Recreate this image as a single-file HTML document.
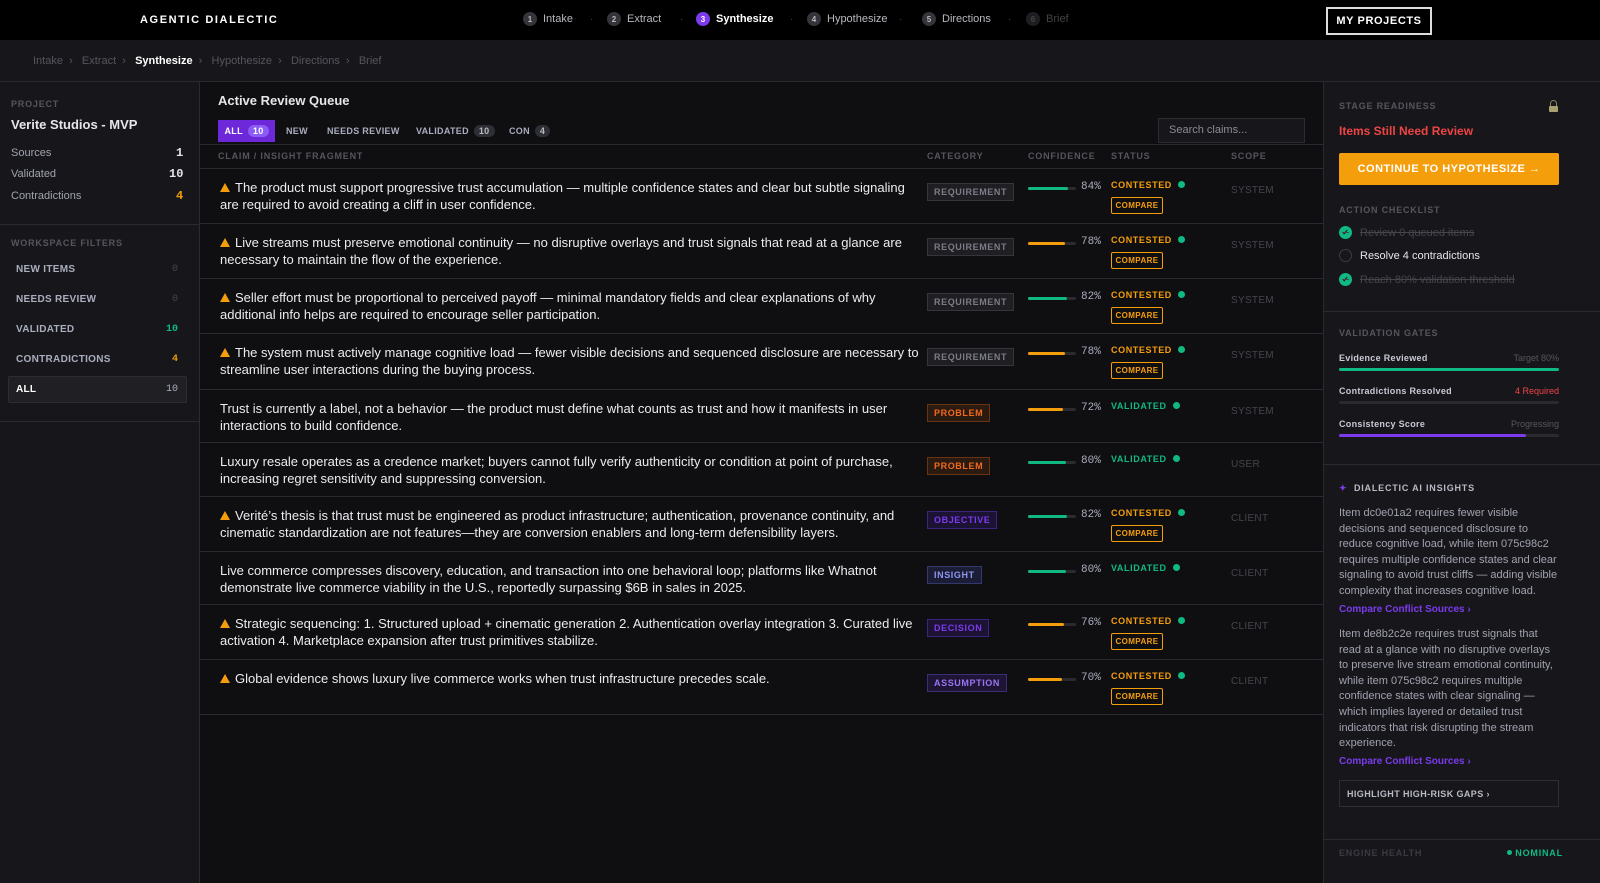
<!DOCTYPE html>
<html><head><meta charset="utf-8"><style>
*{box-sizing:border-box;margin:0;padding:0}
body{width:1600px;height:883px;overflow:hidden;background:#0f0f12;font-family:"Liberation Sans",sans-serif;color:#e6e6ea;position:relative}
.abs{position:absolute}
.top{left:0;top:0;width:1600px;height:40px;background:#000}
.logo{left:140px;top:14px;font-size:11px;font-weight:bold;letter-spacing:1.6px;color:#fff}
.step{top:12px;font-size:11px;color:#b8b8c0;display:flex;align-items:center;gap:6px}
.step .n{width:14px;height:14px;border-radius:50%;background:#34343a;color:#bbb;font-size:8px;display:flex;align-items:center;justify-content:center;font-weight:bold}
.dot{top:14px;color:#444;font-size:10px}
.myp{left:1326px;top:7px;width:106px;height:28px;border:2px solid #ddd;color:#fff;font-size:11px;font-weight:bold;letter-spacing:.6px;display:flex;align-items:center;justify-content:center}
.crumb{left:0;top:40px;width:1600px;height:42px;background:#17171b;border-bottom:1px solid #2a2a30}
.cr{top:55px;font-size:11px;color:#55555d}
.left{left:0;top:82px;width:200px;height:801px;background:#17171b;border-right:1px solid #2a2a30}
.right{left:1323px;top:82px;width:277px;height:801px;background:#17171b;border-left:1px solid #2a2a30}
.lbl{font-size:9px;font-weight:bold;letter-spacing:.8px;color:#55555d}
.hr{height:1px;background:#2a2a30}
.mono{font-family:"Liberation Mono",monospace}
.fi{left:16px;font-size:10px;font-weight:bold;color:#a9adbd;letter-spacing:.3px}
.fn{right:1421px;font-size:10px;text-align:right}
.tab{top:120px;height:22px;font-size:9px;font-weight:bold;color:#a9adbd;display:flex;align-items:center;gap:5px;letter-spacing:.3px}
.badge{background:#2e2e36;border-radius:8px;padding:1px 5px;font-size:9px;color:#bbb}
.th{top:151px;font-size:9px;font-weight:bold;color:#55555d;letter-spacing:.8px}
.row{left:200px;width:1123px;border-bottom:1px solid #2a2a30}
.txt{position:absolute;left:20px;top:10px;width:700px;font-size:13px;line-height:17px;color:#ececf0}
.txt.w{text-indent:15px}
.warn{position:absolute;left:20px;top:14px;width:0;height:0;border-left:5px solid transparent;border-right:5px solid transparent;border-bottom:9px solid #f59e0b}
.cat{position:absolute;left:727px;height:18px;padding:0 6px;font-size:9px;font-weight:bold;letter-spacing:.6px;display:flex;align-items:center;border:1px solid}
.req{background:#1e1e23;border-color:#35353c;color:#7c7c86}
.prob{background:#2b1a10;border-color:#6a3414;color:#f26a1b}
.obj{background:#1c1334;border-color:#3b2380;color:#7c3aed}
.ins{background:#1a1d35;border-color:#34396b;color:#8e96ee}
.asm{background:#1d1533;border-color:#3c2d77;color:#9a74f5}
.bar{position:absolute;left:828px;width:48px;height:3px;background:#2a2a30;border-radius:2px}
.bar i{display:block;height:3px;border-radius:2px}
.pct{position:absolute;left:881px;font-size:11px;color:#a9adbd;font-family:"Liberation Mono",monospace}
.st{position:absolute;left:911px;font-size:9px;font-weight:bold;letter-spacing:.6px}
.st b{display:inline-block;width:7px;height:7px;border-radius:50%;background:#10b981;margin-left:6px;vertical-align:0}
.cmp{position:absolute;left:911px;width:52px;height:17px;border:1px solid #f59e0b;color:#f59e0b;font-size:8px;font-weight:bold;letter-spacing:.4px;display:flex;align-items:center;justify-content:center;border-radius:2px}
.sc{position:absolute;left:1031px;font-size:10px;color:#45454d;letter-spacing:.3px}
.gl{font-size:9px;font-weight:bold;color:#c8cad4;letter-spacing:.3px}
.gr{font-size:9px;color:#55555d;right:41px}
.gb{left:1339px;width:220px;height:3px;background:#2a2a30;border-radius:2px}
.chk{width:13px;height:13px;border-radius:50%;background:#10b981;color:#0f0f12;font-size:8px;display:flex;align-items:center;justify-content:center;font-weight:bold}
.ck{left:1339px;display:flex;align-items:center;gap:8px;font-size:11px}
.para{left:1339px;width:222px;font-size:11px;line-height:15.6px;color:#a0a3ae}
.lnk{left:1339px;font-size:10px;font-weight:bold;color:#7c3aed}
</style></head><body>
<div class="abs top"></div>
<div class="abs logo">AGENTIC DIALECTIC</div>
<div class="abs step" style="left:523px"><span class="n">1</span>Intake</div>
<div class="abs dot" style="left:590px">·</div>
<div class="abs step" style="left:607px"><span class="n">2</span>Extract</div>
<div class="abs dot" style="left:680px">·</div>
<div class="abs step" style="left:696px;color:#fff;font-weight:bold"><span class="n" style="background:#7c3aed;color:#fff">3</span>Synthesize</div>
<div class="abs dot" style="left:790px">·</div>
<div class="abs step" style="left:807px"><span class="n">4</span>Hypothesize</div>
<div class="abs dot" style="left:899px">·</div>
<div class="abs step" style="left:922px"><span class="n">5</span>Directions</div>
<div class="abs dot" style="left:1008px">·</div>
<div class="abs step" style="left:1026px;color:#444"><span class="n" style="background:#1e1e22;color:#444">6</span>Brief</div>
<div class="abs myp">MY PROJECTS</div>

<div class="abs crumb"></div>
<div class="abs cr" style="left:33px">Intake &nbsp;›&nbsp;&nbsp; Extract &nbsp;›&nbsp;&nbsp; <span style="color:#fff;font-weight:bold">Synthesize</span> &nbsp;›&nbsp;&nbsp; Hypothesize &nbsp;›&nbsp;&nbsp; Directions &nbsp;›&nbsp;&nbsp; Brief</div>

<div class="abs left"></div>
<div class="abs lbl" style="left:11px;top:99px">PROJECT</div>
<div class="abs" style="left:11px;top:117px;font-size:13px;font-weight:bold">Verite Studios - MVP</div>
<div class="abs" style="left:11px;top:147px;font-size:11px;color:#a0a3ae">Sources</div>
<div class="abs mono" style="left:176px;top:146px;font-size:12px;font-weight:bold">1</div>
<div class="abs" style="left:11px;top:168px;font-size:11px;color:#a0a3ae">Validated</div>
<div class="abs mono" style="left:169px;top:167px;font-size:12px;font-weight:bold">10</div>
<div class="abs" style="left:11px;top:190px;font-size:11px;color:#a0a3ae">Contradictions</div>
<div class="abs mono" style="left:176px;top:189px;font-size:12px;font-weight:bold;color:#f59e0b">4</div>
<div class="abs hr" style="left:0;top:224px;width:199px"></div>
<div class="abs lbl" style="left:11px;top:238px">WORKSPACE FILTERS</div>
<div class="abs fi" style="top:264px">NEW ITEMS</div><div class="abs mono" style="left:172px;top:264px;font-size:10px;color:#45454d">0</div>
<div class="abs fi" style="top:294px">NEEDS REVIEW</div><div class="abs mono" style="left:172px;top:294px;font-size:10px;color:#45454d">0</div>
<div class="abs fi" style="top:324px">VALIDATED</div><div class="abs mono" style="left:166px;top:324px;font-size:10px;font-weight:bold;color:#10b981">10</div>
<div class="abs fi" style="top:354px">CONTRADICTIONS</div><div class="abs mono" style="left:172px;top:354px;font-size:10px;font-weight:bold;color:#f59e0b">4</div>
<div class="abs" style="left:8px;top:376px;width:179px;height:27px;background:#1f1f24;border:1px solid #2c2c33;border-radius:2px"></div>
<div class="abs fi" style="top:384px;color:#fff">ALL</div><div class="abs mono" style="left:166px;top:384px;font-size:10px;color:#a9adbd">10</div>
<div class="abs hr" style="left:0;top:421px;width:199px"></div>

<div class="abs" style="left:218px;top:93px;font-size:13px;font-weight:bold">Active Review Queue</div>
<div class="abs tab" style="left:218px;width:57px;background:#6d28d9;color:#fff;justify-content:center">ALL <span class="badge" style="background:#8b5cf6;color:#fff">10</span></div>
<div class="abs tab" style="left:286px">NEW</div>
<div class="abs tab" style="left:327px">NEEDS REVIEW</div>
<div class="abs tab" style="left:416px">VALIDATED <span class="badge">10</span></div>
<div class="abs tab" style="left:509px">CON <span class="badge">4</span></div>
<div class="abs" style="left:1158px;top:118px;width:147px;height:25px;border:1px solid #2c2c33;background:#17171b;font-size:11px;color:#8a8a94;padding:5px 10px">Search claims...</div>
<div class="abs hr" style="left:200px;top:144px;width:1123px"></div>
<div class="abs th" style="left:218px">CLAIM / INSIGHT FRAGMENT</div>
<div class="abs th" style="left:927px">CATEGORY</div>
<div class="abs th" style="left:1028px">CONFIDENCE</div>
<div class="abs th" style="left:1111px">STATUS</div>
<div class="abs th" style="left:1231px">SCOPE</div>
<div class="abs hr" style="left:200px;top:168px;width:1123px"></div>

<!-- rows -->
<div class="abs row" style="top:169px;height:55px"><i class="warn"></i><div class="txt w">The product must support progressive trust accumulation — multiple confidence states and clear but subtle signaling are required to avoid creating a cliff in user confidence.</div>
<div class="cat req" style="top:14px">REQUIREMENT</div><div class="bar" style="top:18px"><i style="width:84%;background:#10b981"></i></div><div class="pct" style="top:12px">84%</div>
<div class="st" style="top:11px;color:#f59e0b">CONTESTED<b></b></div><div class="cmp" style="top:28px">COMPARE</div><div class="sc" style="top:16px">SYSTEM</div></div>

<div class="abs row" style="top:224px;height:55px"><i class="warn"></i><div class="txt w">Live streams must preserve emotional continuity — no disruptive overlays and trust signals that read at a glance are necessary to maintain the flow of the experience.</div>
<div class="cat req" style="top:14px">REQUIREMENT</div><div class="bar" style="top:18px"><i style="width:78%;background:#f59e0b"></i></div><div class="pct" style="top:12px">78%</div>
<div class="st" style="top:11px;color:#f59e0b">CONTESTED<b></b></div><div class="cmp" style="top:28px">COMPARE</div><div class="sc" style="top:16px">SYSTEM</div></div>

<div class="abs row" style="top:279px;height:55px"><i class="warn"></i><div class="txt w">Seller effort must be proportional to perceived payoff — minimal mandatory fields and clear explanations of why additional info helps are required to encourage seller participation.</div>
<div class="cat req" style="top:14px">REQUIREMENT</div><div class="bar" style="top:18px"><i style="width:82%;background:#10b981"></i></div><div class="pct" style="top:12px">82%</div>
<div class="st" style="top:11px;color:#f59e0b">CONTESTED<b></b></div><div class="cmp" style="top:28px">COMPARE</div><div class="sc" style="top:16px">SYSTEM</div></div>

<div class="abs row" style="top:334px;height:56px"><i class="warn"></i><div class="txt w">The system must actively manage cognitive load — fewer visible decisions and sequenced disclosure are necessary to streamline user interactions during the buying process.</div>
<div class="cat req" style="top:14px">REQUIREMENT</div><div class="bar" style="top:18px"><i style="width:78%;background:#f59e0b"></i></div><div class="pct" style="top:12px">78%</div>
<div class="st" style="top:11px;color:#f59e0b">CONTESTED<b></b></div><div class="cmp" style="top:28px">COMPARE</div><div class="sc" style="top:16px">SYSTEM</div></div>

<div class="abs row" style="top:390px;height:53px"><div class="txt">Trust is currently a label, not a behavior — the product must define what counts as trust and how it manifests in user interactions to build confidence.</div>
<div class="cat prob" style="top:14px">PROBLEM</div><div class="bar" style="top:18px"><i style="width:72%;background:#f59e0b"></i></div><div class="pct" style="top:12px">72%</div>
<div class="st" style="top:11px;color:#10b981">VALIDATED<b></b></div><div class="sc" style="top:16px">SYSTEM</div></div>

<div class="abs row" style="top:443px;height:54px"><div class="txt">Luxury resale operates as a credence market; buyers cannot fully verify authenticity or condition at point of purchase, increasing regret sensitivity and suppressing conversion.</div>
<div class="cat prob" style="top:14px">PROBLEM</div><div class="bar" style="top:18px"><i style="width:80%;background:#10b981"></i></div><div class="pct" style="top:12px">80%</div>
<div class="st" style="top:11px;color:#10b981">VALIDATED<b></b></div><div class="sc" style="top:16px">USER</div></div>

<div class="abs row" style="top:497px;height:55px"><i class="warn"></i><div class="txt w">Verité’s thesis is that trust must be engineered as product infrastructure; authentication, provenance continuity, and cinematic standardization are not features—they are conversion enablers and long-term defensibility layers.</div>
<div class="cat obj" style="top:14px">OBJECTIVE</div><div class="bar" style="top:18px"><i style="width:82%;background:#10b981"></i></div><div class="pct" style="top:12px">82%</div>
<div class="st" style="top:11px;color:#f59e0b">CONTESTED<b></b></div><div class="cmp" style="top:28px">COMPARE</div><div class="sc" style="top:16px">CLIENT</div></div>

<div class="abs row" style="top:552px;height:53px"><div class="txt">Live commerce compresses discovery, education, and transaction into one behavioral loop; platforms like Whatnot demonstrate live commerce viability in the U.S., reportedly surpassing $6B in sales in 2025.</div>
<div class="cat ins" style="top:14px">INSIGHT</div><div class="bar" style="top:18px"><i style="width:80%;background:#10b981"></i></div><div class="pct" style="top:12px">80%</div>
<div class="st" style="top:11px;color:#10b981">VALIDATED<b></b></div><div class="sc" style="top:16px">CLIENT</div></div>

<div class="abs row" style="top:605px;height:55px"><i class="warn"></i><div class="txt w">Strategic sequencing: 1. Structured upload + cinematic generation 2. Authentication overlay integration 3. Curated live activation 4. Marketplace expansion after trust primitives stabilize.</div>
<div class="cat obj" style="top:14px">DECISION</div><div class="bar" style="top:18px"><i style="width:76%;background:#f59e0b"></i></div><div class="pct" style="top:12px">76%</div>
<div class="st" style="top:11px;color:#f59e0b">CONTESTED<b></b></div><div class="cmp" style="top:28px">COMPARE</div><div class="sc" style="top:16px">CLIENT</div></div>

<div class="abs row" style="top:660px;height:55px"><i class="warn"></i><div class="txt w">Global evidence shows luxury live commerce works when trust infrastructure precedes scale.</div>
<div class="cat asm" style="top:14px">ASSUMPTION</div><div class="bar" style="top:18px"><i style="width:70%;background:#f59e0b"></i></div><div class="pct" style="top:12px">70%</div>
<div class="st" style="top:11px;color:#f59e0b">CONTESTED<b></b></div><div class="cmp" style="top:28px">COMPARE</div><div class="sc" style="top:16px">CLIENT</div></div>

<!-- right -->
<div class="abs right"></div>
<div class="abs lbl" style="left:1339px;top:101px">STAGE READINESS</div>
<div class="abs" style="left:1549px;top:100px;width:9px;height:11px"><div style="width:7px;height:6px;border:1.5px solid #8a8460;border-bottom:none;border-radius:4px 4px 0 0;margin-left:1px"></div><div style="width:9px;height:6px;background:#a8a070;border-radius:1px"></div></div>
<div class="abs" style="left:1339px;top:124px;font-size:12px;font-weight:bold;color:#ef4444">Items Still Need Review</div>
<div class="abs" style="left:1339px;top:153px;width:220px;height:32px;background:#f59e0b;border-radius:2px;color:#fff;font-size:11px;font-weight:bold;letter-spacing:.5px;display:flex;align-items:center;justify-content:center">CONTINUE TO HYPOTHESIZE →</div>
<div class="abs lbl" style="left:1339px;top:205px">ACTION CHECKLIST</div>
<div class="abs ck" style="top:226px;color:#45454d;text-decoration:line-through"><span class="chk">✓</span>Review 0 queued items</div>
<div class="abs ck" style="top:249px;color:#e6e6ea"><span class="chk" style="background:none;border:1.5px solid #3a3a42"></span>Resolve 4 contradictions</div>
<div class="abs ck" style="top:273px;color:#45454d;text-decoration:line-through"><span class="chk">✓</span>Reach 80% validation threshold</div>
<div class="abs hr" style="left:1324px;top:311px;width:276px"></div>
<div class="abs lbl" style="left:1339px;top:328px">VALIDATION GATES</div>
<div class="abs gl" style="left:1339px;top:353px">Evidence Reviewed</div><div class="abs gr" style="top:353px">Target 80%</div>
<div class="abs gb" style="top:368px;background:#10b981"></div>
<div class="abs gl" style="left:1339px;top:386px">Contradictions Resolved</div><div class="abs gr" style="top:386px;color:#ef4444">4 Required</div>
<div class="abs gb" style="top:401px"></div>
<div class="abs gl" style="left:1339px;top:419px">Consistency Score</div><div class="abs gr" style="top:419px">Progressing</div>
<div class="abs gb" style="top:434px"><div style="width:85%;height:3px;background:#7c3aed;border-radius:2px"></div></div>
<div class="abs hr" style="left:1324px;top:464px;width:276px"></div>
<div class="abs lbl" style="left:1339px;top:483px;color:#b8bac4"><span style="color:#7c3aed">✦</span>&nbsp; DIALECTIC AI INSIGHTS</div>
<div class="abs para" style="top:506px">Item dc0e01a2 requires fewer visible decisions and sequenced disclosure to reduce cognitive load, while item 075c98c2 requires multiple confidence states and clear signaling to avoid trust cliffs — adding visible complexity that increases cognitive load.</div>
<div class="abs lnk" style="top:604px">Compare Conflict Sources ›</div>
<div class="abs para" style="top:627px">Item de8b2c2e requires trust signals that read at a glance with no disruptive overlays to preserve live stream emotional continuity, while item 075c98c2 requires multiple confidence states with clear signaling — which implies layered or detailed trust indicators that risk disrupting the stream experience.</div>
<div class="abs lnk" style="top:756px">Compare Conflict Sources ›</div>
<div class="abs" style="left:1339px;top:780px;width:220px;height:27px;border:1px solid #2e2e35;font-size:9px;font-weight:bold;color:#b8bac4;letter-spacing:.4px;padding:8px 7px">HIGHLIGHT HIGH-RISK GAPS ›</div>
<div class="abs hr" style="left:1324px;top:839px;width:276px"></div>
<div class="abs lbl" style="left:1339px;top:848px;color:#3a3a42">ENGINE HEALTH</div>
<div class="abs lbl" style="left:1507px;top:848px;color:#10b981"><span style="display:inline-block;width:5px;height:5px;border-radius:50%;background:#10b981;vertical-align:1px"></span> NOMINAL</div>
</body></html>
